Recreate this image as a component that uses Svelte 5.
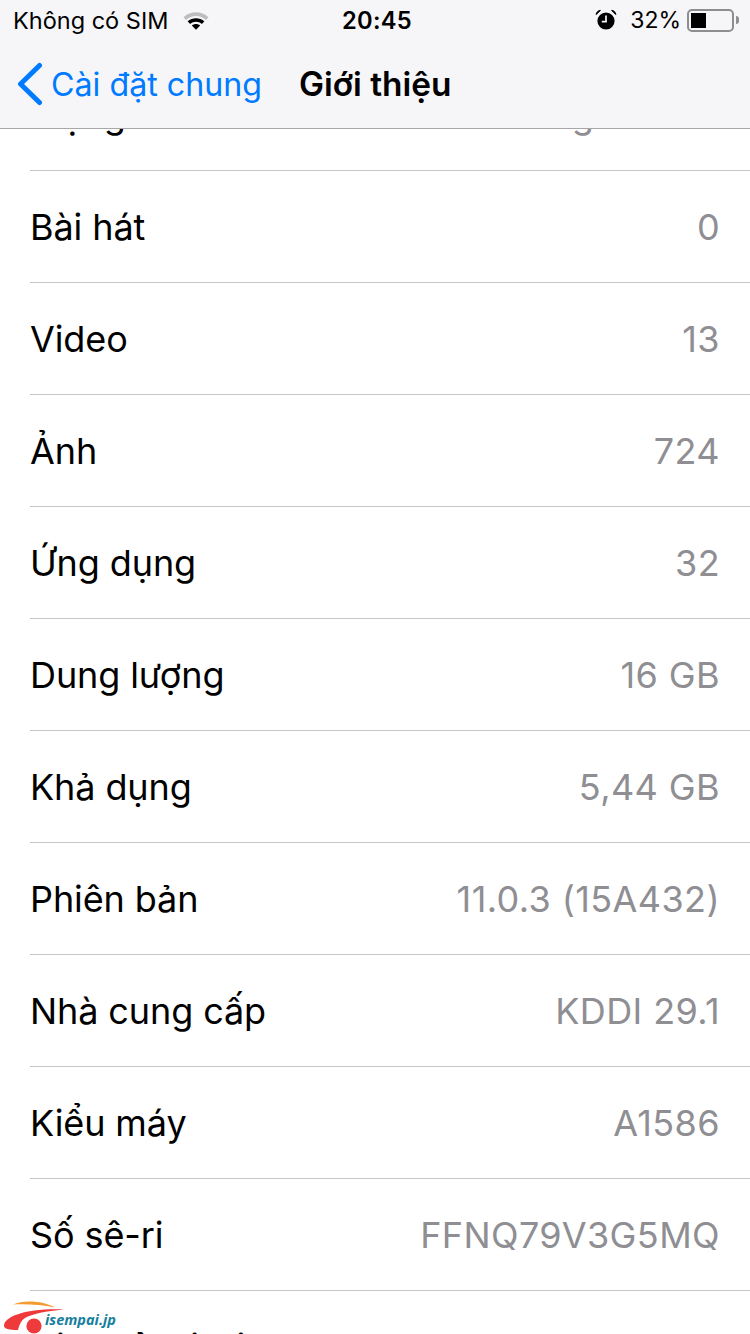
<script>
	const rows = [
		['Mạng', 'Không có sẵn'],
		['Bài hát', '0'],
		['Video', '13'],
		['Ảnh', '724'],
		['Ứng dụng', '32'],
		['Dung lượng', '16 GB'],
		['Khả dụng', '5,44 GB'],
		['Phiên bản', '11.0.3 (15A432)'],
		['Nhà cung cấp', 'KDDI 29.1'],
		['Kiểu máy', 'A1586'],
		['Số sê-ri', 'FFNQ79V3G5MQ'],
		['Địa chỉ Wi-Fi', '50:77:57:3B:77:50']
	];
</script>

<div class="phone">
	<header class="top">
		<div class="status">
			<div class="side">
				<span>Không có SIM</span>
				<svg class="wifi" width="28" height="20" viewBox="0 0 28 20">
					<path d="M1.5 7.2C8.6 .6 19.4 .6 26.5 7.2L24 9.9C18.2 4.8 9.8 4.8 4 9.9Z" fill="#bdbdbf" />
					<path d="M5.6 11.3C10.4 7.1 17.6 7.1 22.4 11.3L19.9 14C16.4 11.1 11.6 11.1 8.1 14Z" fill="#000" />
					<path d="M9.8 15.4C12.3 13.4 15.7 13.4 18.2 15.4L14 19.8Z" fill="#000" />
				</svg>
			</div>
			<div class="clock">20:45</div>
			<div class="side right">
				<svg class="alarm" width="22" height="22" viewBox="0 0 22 22">
					<circle cx="11" cy="12" r="8.6" fill="#000" />
					<path d="M11 6.5V12.6H6.8" fill="none" stroke="#f6f6f8" stroke-width="1.7" />
					<path d="M1.2 5.6C1.4 3 3 1.6 5.4 1.4ZM20.8 5.6C20.6 3 19 1.6 16.6 1.4Z" fill="#000" stroke="#000" stroke-width="1" />
				</svg>
				<span class="pct">32%</span>
				<div class="battery"><div class="level"></div></div>
				<div class="nub"></div>
			</div>
		</div>
		<nav class="bar">
			<div class="back">
				<svg width="26" height="44" viewBox="0 0 26 44">
					<path d="M23.5 3.5L4.5 22L23.5 40.5" fill="none" stroke="#007aff" stroke-width="5" stroke-linecap="round" stroke-linejoin="round" />
				</svg>
				<span>Cài đặt chung</span>
			</div>
			<div class="title">Giới thiệu</div>
		</nav>
	</header>

	<main class="list">
		{#each rows as [label, value]}
			<div class="row">
				<span class="label">{label}</span>
				<span class="value">{value}</span>
			</div>
		{/each}
	</main>

	<div class="logo">
		<svg width="66" height="34" viewBox="0 0 66 34">
			<path d="M13 4.5C24 -.5 44 1 55 7.5C42 4.5 26 4 13 4.5Z" fill="#f59a2f" />
			<path d="M4 26C4 16 28 8 64 9.5C46 11 32 14 25 18C21 20.5 19 26 18 30C14 30 4 30 4 26Z" fill="#ee3a3a" />
			<circle cx="34" cy="26" r="7.6" fill="#ee3a3a" />
		</svg>
		<span class="brand">isempai.jp</span>
	</div>
</div>

<style>
	:global(body) {
		background: #fff;
	}

	.phone {
		position: relative;
		display: flex;
		flex-direction: column;
		width: 750px;
		height: 1334px;
		overflow: hidden;
		background: #fff;
		color: #000;
		font-family: Inter, 'Noto Sans', sans-serif;
	}

	.top {
		flex: none;
		height: 128px;
		background: #f6f6f8;
		border-bottom: 1px solid #a7a7aa;
	}

	.status {
		display: grid;
		grid-template-columns: 1fr auto 1fr;
		align-items: center;
		height: 40px;
		padding: 0 11px 0 13px;
		font-size: 23.5px;
	}

	.side {
		display: flex;
		align-items: center;
		gap: 14px;
	}

	.right {
		justify-content: flex-end;
		gap: 0;
	}

	.clock {
		margin-left: 2px;
		font-size: 23.7px;
		font-weight: 600;
		letter-spacing: 0.3px;
	}

	.pct {
		margin: 0 6px 0 13px;
		font-size: 23px;
	}

	.battery {
		box-sizing: border-box;
		width: 47px;
		height: 23px;
		padding: 2px;
		border: 2px solid #8e8e90;
		border-radius: 5px;
	}

	.level {
		width: 15px;
		height: 100%;
		background: #000;
	}

	.nub {
		width: 3px;
		height: 8px;
		margin-left: 2px;
		background: #8e8e90;
		border-radius: 0 3px 3px 0;
	}

	.bar {
		display: flex;
		align-items: center;
		height: 88px;
		padding-left: 16px;
		font-size: 32.2px;
	}

	.back {
		display: flex;
		align-items: center;
		gap: 9px;
		width: 283px;
		color: #007aff;
	}

	.title {
		font-size: 33.4px;
		font-weight: 600;
	}

	.list {
		flex: 1;
		min-height: 0;
		overflow: hidden;
	}

	.row {
		box-sizing: border-box;
		display: flex;
		align-items: center;
		justify-content: space-between;
		height: 112px;
		margin-left: 30px;
		padding: 0 30px 0 0;
		border-bottom: 1px solid #c8c7cc;
		font-size: 36px;
	}

	.row:first-child {
		margin-top: -70px;
	}

	.label {
		letter-spacing: -0.1px;
	}

	.value {
		color: #8e8e93;
		letter-spacing: 0.4px;
	}

	.logo {
		position: absolute;
		left: 0;
		bottom: 0;
		height: 34px;
	}

	.brand {
		position: absolute;
		left: 45px;
		top: 10px;
		color: #177f9d;
		font-family: 'Open Sans', sans-serif;
		font-size: 14.5px;
		font-style: italic;
		font-weight: 700;
		white-space: nowrap;
	}
</style>
